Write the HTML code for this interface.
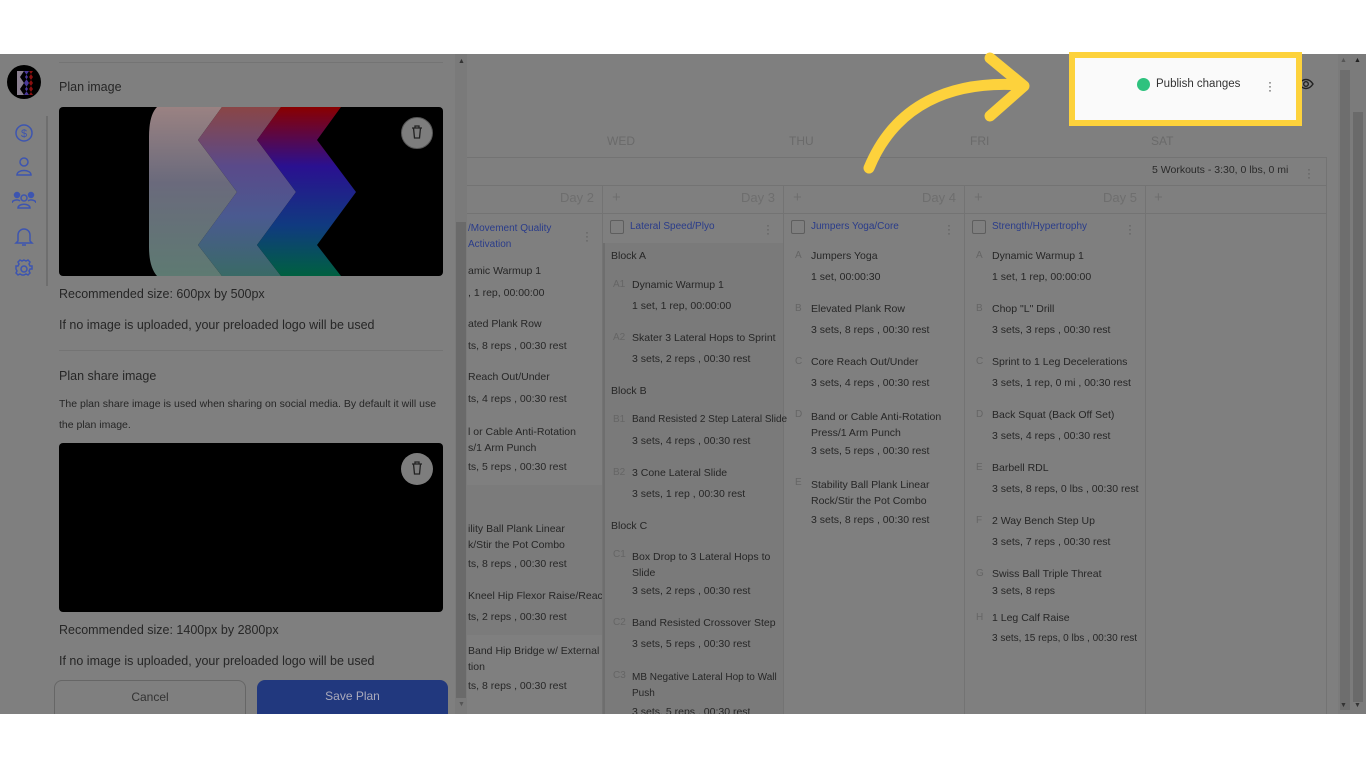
<!DOCTYPE html><html><head><meta charset="utf-8"><style>
*{margin:0;padding:0;box-sizing:border-box}
body{width:1366px;height:768px;background:#fff;position:relative;overflow:hidden;font-family:"Liberation Sans",sans-serif;color:#262626}
.a{position:absolute;white-space:nowrap}
.t{font-size:10.5px;color:#262626}
.l{font-size:10px;color:#656565}
.b{font-size:10px;color:#2a3c8a}
.h{font-size:12px;color:#6a6a6a}
.p{font-size:12.5px;color:#262626}
.vl{position:absolute;width:1px;background:#737373}
.hl{position:absolute;height:1px;background:#737373}
.cb{position:absolute;width:14px;height:14px;border:1px solid #5e5e5e;border-radius:2px}
.dots{position:absolute;font-size:12px;color:#5a5a5a;line-height:4px;width:4px;text-align:center}
</style></head><body>
<div class="a" style="left:0;top:54px;width:1366px;height:660px;background:#7f7f7f"></div>
<!-- sidebar -->
<div class="a" style="left:46px;top:116px;width:2px;height:170px;background:#6e6e6e"></div>
<div class="a" style="left:7px;top:65px;width:34px;height:34px;border-radius:50%;background:#000;overflow:hidden">
<svg width="34" height="34"><path d="M10 6h7l-4 6 4 6-4 6 4 6h-7z" fill="#8a8090"/><path d="M17 6h5l-4 6 4 6-4 6 4 6h-5l4-6-4-6 4-6z" fill="#4a3a9a"/><path d="M22 6h4l-4 6 4 6-4 6 4 6h-4l4-6-4-6 4-6z" fill="#8a1010"/></svg></div>
<svg class="a" style="left:12px;top:121px" width="24" height="165" fill="none" stroke="#3d55b0" stroke-width="1.5">
<circle cx="12" cy="12" r="8"/><text x="12" y="16" font-size="11" fill="#3d55b0" stroke="none" text-anchor="middle" font-family="Liberation Sans">$</text>
<circle cx="12" cy="41" r="4"/><path d="M5 54c0-6 14-6 14 0z"/>
<circle cx="12" cy="77" r="3"/><circle cx="5" cy="74" r="2.5" fill="#3d55b0"/><circle cx="19" cy="74" r="2.5" fill="#3d55b0"/><path d="M6 87c0-5 12-5 12 0zM0 82c0-3 6-4 8-2M24 82c0-3-6-4-8-2"/>
<path d="M6 120v-6a6 6 0 0 1 12 0v6l2 2H4z M10 124h4"/>
<circle cx="12" cy="148" r="3"/><path d="M12 139l2 1 2-1 2 2-1 2 1 2h2v3h-2l-1 2 1 2-2 2-2-1-2 1-2 0-2-1-2 1-2-2 1-2-1-2H4v-3h2l1-2-1-2 2-2 2 1z"/>
</svg>
<!-- left panel -->
<div class="hl" style="left:59px;top:62px;width:384px;background:#747474"></div>
<div class="a p" style="left:59px;top:80px">Plan image</div>
<div class="a" style="left:59px;top:107px;width:384px;height:169px;background:#000;border-radius:4px;overflow:hidden">
<svg width="384" height="169" style="position:absolute;left:0;top:0">
<defs>
<linearGradient id="g1" x1="0" y1="0" x2="0" y2="1"><stop offset="0" stop-color="#9a8282"/><stop offset=".45" stop-color="#6a6a7c"/><stop offset="1" stop-color="#5e7a72"/></linearGradient>
<linearGradient id="g2" x1="0" y1="0" x2="0" y2="1"><stop offset="0" stop-color="#8a4646"/><stop offset=".35" stop-color="#5a4a8a"/><stop offset=".65" stop-color="#4a5a90"/><stop offset="1" stop-color="#3a6a66"/></linearGradient>
<linearGradient id="g3" x1="0" y1="0" x2="0" y2="1"><stop offset="0" stop-color="#8a0000"/><stop offset=".35" stop-color="#2a1090"/><stop offset=".7" stop-color="#103a80"/><stop offset="1" stop-color="#006040"/></linearGradient>
</defs>
<path d="M98 0H163L139 33L178 85L139 138L163 169H98Q90 160 90 140V30Q90 8 98 0Z" fill="url(#g1)"/>
<path d="M163 0H222L198 33L237 85L198 138L222 169H163L139 138L178 85L139 33Z" fill="url(#g2)"/>
<path d="M222 0H282L258 33L297 85L258 138L282 169H222L198 138L237 85L198 33Z" fill="url(#g3)"/>
</svg>
<div style="position:absolute;left:342px;top:10px;width:32px;height:32px;border-radius:50%;background:#7d7d7d;border:1px solid #555"></div>
<svg style="position:absolute;left:352px;top:18px" width="12" height="14" fill="none" stroke="#222" stroke-width="1.3"><path d="M1 3h10M4 3V1h4v2M2.5 3l1 10h5l1-10"/></svg>
</div>
<div class="a p" style="left:59px;top:287px">Recommended size: 600px by 500px</div>
<div class="a p" style="left:59px;top:318px">If no image is uploaded, your preloaded logo will be used</div>
<div class="hl" style="left:59px;top:350px;width:384px;background:#747474"></div>
<div class="a p" style="left:59px;top:369px">Plan share image</div>
<div class="a" style="left:59px;top:394px;font-size:10.5px;line-height:21px;width:390px;white-space:normal;color:#262626">The plan share image is used when sharing on social media. By default it will use the plan image.</div>
<div class="a" style="left:59px;top:443px;width:384px;height:169px;background:#000;border-radius:4px">
<div style="position:absolute;left:342px;top:10px;width:32px;height:32px;border-radius:50%;background:#7d7d7d"></div>
<svg style="position:absolute;left:352px;top:18px" width="12" height="14" fill="none" stroke="#222" stroke-width="1.3"><path d="M1 3h10M4 3V1h4v2M2.5 3l1 10h5l1-10"/></svg>
</div>
<div class="a p" style="left:59px;top:623px">Recommended size: 1400px by 2800px</div>
<div class="a p" style="left:59px;top:654px">If no image is uploaded, your preloaded logo will be used</div>
<div class="a" style="left:54px;top:680px;width:192px;height:34px;border:1px solid #666;border-bottom:none;border-radius:8px 8px 0 0;font-size:12px;text-align:center;line-height:32px;color:#333">Cancel</div>
<div class="a" style="left:257px;top:680px;width:191px;height:34px;background:#21387e;border-radius:8px 8px 0 0;font-size:12px;text-align:center;line-height:32px;color:#aab">Save Plan</div>
<div class="a" style="left:455px;top:54px;width:12px;height:660px;background:#7a7a7a"></div>
<div class="a" style="left:456px;top:222px;width:10px;height:476px;background:#6a6a6a"></div>
<div class="a" style="left:458px;top:58px;font-size:7px;color:#333">▲</div>
<div class="a" style="left:458px;top:701px;font-size:7px;color:#555">▼</div>
<!-- calendar header -->
<div class="a h" style="left:607px;top:134px">WED</div>
<div class="a h" style="left:789px;top:134px">THU</div>
<div class="a h" style="left:970px;top:134px">FRI</div>
<div class="a h" style="left:1151px;top:134px">SAT</div>
<div class="hl" style="left:467px;top:157px;width:860px"></div>
<div class="vl" style="left:1326px;top:157px;height:557px"></div>
<div class="a" style="left:1152px;top:164px;font-size:10.5px;color:#2a2a2a">5 Workouts - 3:30, 0 lbs, 0 mi</div>
<div class="dots" style="left:1307px;top:167px">·<br>·<br>·</div>
<div class="hl" style="left:467px;top:185px;width:860px"></div>
<div class="hl" style="left:467px;top:213px;width:860px"></div>
<div class="vl" style="left:602px;top:185px;height:529px"></div>
<div class="vl" style="left:783px;top:185px;height:529px"></div>
<div class="vl" style="left:964px;top:185px;height:529px"></div>
<div class="vl" style="left:1145px;top:185px;height:529px"></div>
<div class="a" style="left:603px;top:243px;width:180px;height:471px;background:#7a7a7a"></div>
<div class="a" style="left:467px;top:485px;width:135px;height:150px;background:#7b7b7b"></div>
<div class="a" style="left:603px;top:243px;width:2px;height:471px;background:#6e6e6e"></div>
<div class="a" style="left:560px;top:190px;font-size:13px;color:#6e6e6e">Day 2</div>
<div class="a" style="left:612px;top:189px;font-size:15px;color:#6e6e6e">+</div>
<div class="a" style="left:741px;top:190px;font-size:13px;color:#6e6e6e">Day 3</div>
<div class="a" style="left:793px;top:189px;font-size:15px;color:#6e6e6e">+</div>
<div class="a" style="left:922px;top:190px;font-size:13px;color:#6e6e6e">Day 4</div>
<div class="a" style="left:974px;top:189px;font-size:15px;color:#6e6e6e">+</div>
<div class="a" style="left:1103px;top:190px;font-size:13px;color:#6e6e6e">Day 5</div>
<div class="a" style="left:1154px;top:189px;font-size:15px;color:#6e6e6e">+</div>
<!-- day 2 -->
<div class="a b" style="left:468px;top:221px;line-height:16px">/Movement Quality<br>Activation</div>
<div class="dots" style="left:585px;top:230px">·<br>·<br>·</div>
<div class="a t" style="left:468px;top:265px">amic Warmup 1</div>
<div class="a t" style="left:468px;top:287px">, 1 rep, 00:00:00</div>
<div class="a t" style="left:468px;top:318px">ated Plank Row</div>
<div class="a t" style="left:468px;top:340px">ts, 8 reps , 00:30 rest</div>
<div class="a t" style="left:468px;top:371px">Reach Out/Under</div>
<div class="a t" style="left:468px;top:393px">ts, 4 reps , 00:30 rest</div>
<div class="a t" style="left:468px;top:424px;line-height:16px">l or Cable Anti-Rotation<br>s/1 Arm Punch</div>
<div class="a t" style="left:468px;top:461px">ts, 5 reps , 00:30 rest</div>
<div class="a t" style="left:468px;top:521px;line-height:16px">ility Ball Plank Linear<br>k/Stir the Pot Combo</div>
<div class="a t" style="left:468px;top:558px">ts, 8 reps , 00:30 rest</div>
<div class="a t" style="left:468px;top:590px;width:134px;overflow:hidden">Kneel Hip Flexor Raise/Reach</div>
<div class="a t" style="left:468px;top:611px">ts, 2 reps , 00:30 rest</div>
<div class="a t" style="left:468px;top:643px;line-height:16px">Band Hip Bridge w/ External<br>tion</div>
<div class="a t" style="left:468px;top:680px">ts, 8 reps , 00:30 rest</div>
<!-- day 3 -->
<div class="cb" style="left:610px;top:220px"></div>
<div class="a b" style="left:630px;top:221px">Lateral Speed/Plyo</div>
<div class="dots" style="left:766px;top:223px">·<br>·<br>·</div>
<div class="a t" style="left:611px;top:250px">Block A</div>
<div class="a l" style="left:613px;top:279px">A1</div><div class="a t" style="left:632px;top:279px">Dynamic Warmup 1</div>
<div class="a t" style="left:632px;top:300px">1 set, 1 rep, 00:00:00</div>
<div class="a l" style="left:613px;top:332px">A2</div><div class="a t" style="left:632px;top:332px">Skater 3 Lateral Hops to Sprint</div>
<div class="a t" style="left:632px;top:353px">3 sets, 2 reps , 00:30 rest</div>
<div class="a t" style="left:611px;top:385px">Block B</div>
<div class="a l" style="left:613px;top:414px">B1</div><div class="a t" style="left:632px;top:414px;font-size:10px">Band Resisted 2 Step Lateral Slide</div>
<div class="a t" style="left:632px;top:435px">3 sets, 4 reps , 00:30 rest</div>
<div class="a l" style="left:613px;top:467px">B2</div><div class="a t" style="left:632px;top:467px">3 Cone Lateral Slide</div>
<div class="a t" style="left:632px;top:488px">3 sets, 1 rep , 00:30 rest</div>
<div class="a t" style="left:611px;top:520px">Block C</div>
<div class="a l" style="left:613px;top:549px">C1</div><div class="a t" style="left:632px;top:549px;line-height:16px">Box Drop to 3 Lateral Hops to<br>Slide</div>
<div class="a t" style="left:632px;top:585px">3 sets, 2 reps , 00:30 rest</div>
<div class="a l" style="left:613px;top:617px">C2</div><div class="a t" style="left:632px;top:617px">Band Resisted Crossover Step</div>
<div class="a t" style="left:632px;top:638px">3 sets, 5 reps , 00:30 rest</div>
<div class="a l" style="left:613px;top:670px">C3</div><div class="a t" style="left:632px;top:670px;line-height:16px;font-size:10px">MB Negative Lateral Hop to Wall<br>Push</div>
<div class="a t" style="left:632px;top:706px;height:8px;overflow:hidden">3 sets, 5 reps , 00:30 rest</div>
<!-- day 4 -->
<div class="cb" style="left:791px;top:220px"></div>
<div class="a b" style="left:811px;top:221px">Jumpers Yoga/Core</div>
<div class="dots" style="left:947px;top:223px">·<br>·<br>·</div>
<div class="a l" style="left:795px;top:250px">A</div><div class="a t" style="left:811px;top:250px">Jumpers Yoga</div>
<div class="a t" style="left:811px;top:271px">1 set, 00:00:30</div>
<div class="a l" style="left:795px;top:303px">B</div><div class="a t" style="left:811px;top:303px">Elevated Plank Row</div>
<div class="a t" style="left:811px;top:324px">3 sets, 8 reps , 00:30 rest</div>
<div class="a l" style="left:795px;top:356px">C</div><div class="a t" style="left:811px;top:356px">Core Reach Out/Under</div>
<div class="a t" style="left:811px;top:377px">3 sets, 4 reps , 00:30 rest</div>
<div class="a l" style="left:795px;top:409px">D</div><div class="a t" style="left:811px;top:409px;line-height:16px">Band or Cable Anti-Rotation<br>Press/1 Arm Punch</div>
<div class="a t" style="left:811px;top:445px">3 sets, 5 reps , 00:30 rest</div>
<div class="a l" style="left:795px;top:477px">E</div><div class="a t" style="left:811px;top:477px;line-height:16px">Stability Ball Plank Linear<br>Rock/Stir the Pot Combo</div>
<div class="a t" style="left:811px;top:514px">3 sets, 8 reps , 00:30 rest</div>
<!-- day 5 -->
<div class="cb" style="left:972px;top:220px"></div>
<div class="a b" style="left:992px;top:221px">Strength/Hypertrophy</div>
<div class="dots" style="left:1128px;top:223px">·<br>·<br>·</div>
<div class="a l" style="left:976px;top:250px">A</div><div class="a t" style="left:992px;top:250px">Dynamic Warmup 1</div>
<div class="a t" style="left:992px;top:271px">1 set, 1 rep, 00:00:00</div>
<div class="a l" style="left:976px;top:303px">B</div><div class="a t" style="left:992px;top:303px">Chop "L" Drill</div>
<div class="a t" style="left:992px;top:324px">3 sets, 3 reps , 00:30 rest</div>
<div class="a l" style="left:976px;top:356px">C</div><div class="a t" style="left:992px;top:356px">Sprint to 1 Leg Decelerations</div>
<div class="a t" style="left:992px;top:377px">3 sets, 1 rep, 0 mi , 00:30 rest</div>
<div class="a l" style="left:976px;top:409px">D</div><div class="a t" style="left:992px;top:409px">Back Squat (Back Off Set)</div>
<div class="a t" style="left:992px;top:430px">3 sets, 4 reps , 00:30 rest</div>
<div class="a l" style="left:976px;top:462px">E</div><div class="a t" style="left:992px;top:462px">Barbell RDL</div>
<div class="a t" style="left:992px;top:483px">3 sets, 8 reps, 0 lbs , 00:30 rest</div>
<div class="a l" style="left:976px;top:515px">F</div><div class="a t" style="left:992px;top:515px">2 Way Bench Step Up</div>
<div class="a t" style="left:992px;top:536px">3 sets, 7 reps , 00:30 rest</div>
<div class="a l" style="left:976px;top:568px">G</div><div class="a t" style="left:992px;top:568px">Swiss Ball Triple Threat</div>
<div class="a t" style="left:992px;top:585px">3 sets, 8 reps</div>
<div class="a l" style="left:976px;top:612px">H</div><div class="a t" style="left:992px;top:612px">1 Leg Calf Raise</div>
<div class="a t" style="left:992px;top:633px;font-size:10px">3 sets, 15 reps, 0 lbs , 00:30 rest</div>
<!-- right scrollbars -->
<div class="a" style="left:1338px;top:54px;width:28px;height:660px;background:#7b7b7b"></div>
<div class="a" style="left:1340px;top:70px;width:10px;height:640px;background:#6e6e6e"></div>
<div class="a" style="left:1353px;top:112px;width:10px;height:590px;background:#6a6a6a"></div>
<div class="a" style="left:1340px;top:57px;font-size:7px;color:#555">▲</div>
<div class="a" style="left:1354px;top:57px;font-size:7px;color:#222">▲</div>
<div class="a" style="left:1340px;top:702px;font-size:7px;color:#333">▼</div>
<div class="a" style="left:1354px;top:702px;font-size:7px;color:#333">▼</div>
<svg class="a" style="left:1298px;top:78px" width="16" height="12" fill="none" stroke="#222" stroke-width="1.4"><path d="M1 6c4-6 10-6 14 0c-4 6-10 6-14 0z"/><circle cx="8" cy="6" r="2.3"/></svg>
<!-- highlight box -->
<div class="a" style="left:1069px;top:52px;width:233px;height:74px;border:6px solid #fdd23c;background:#fafafa"></div>
<div class="a" style="left:1137px;top:78px;width:13px;height:13px;border-radius:50%;background:#2ec27e"></div>
<div class="a" style="left:1156px;top:78px;font-size:11.5px;color:#333">Publish changes</div>
<div class="dots" style="left:1268px;top:80px;color:#333">·<br>·<br>·</div>
<!-- arrow -->
<svg class="a" style="left:850px;top:50px" width="200" height="130" fill="none" stroke="#fdd23c" stroke-width="11" stroke-linecap="round" stroke-linejoin="round">
<path d="M19 118C45 55 100 30 172 35"/><path d="M140 8l34 28-34 30"/></svg>
</body></html>
